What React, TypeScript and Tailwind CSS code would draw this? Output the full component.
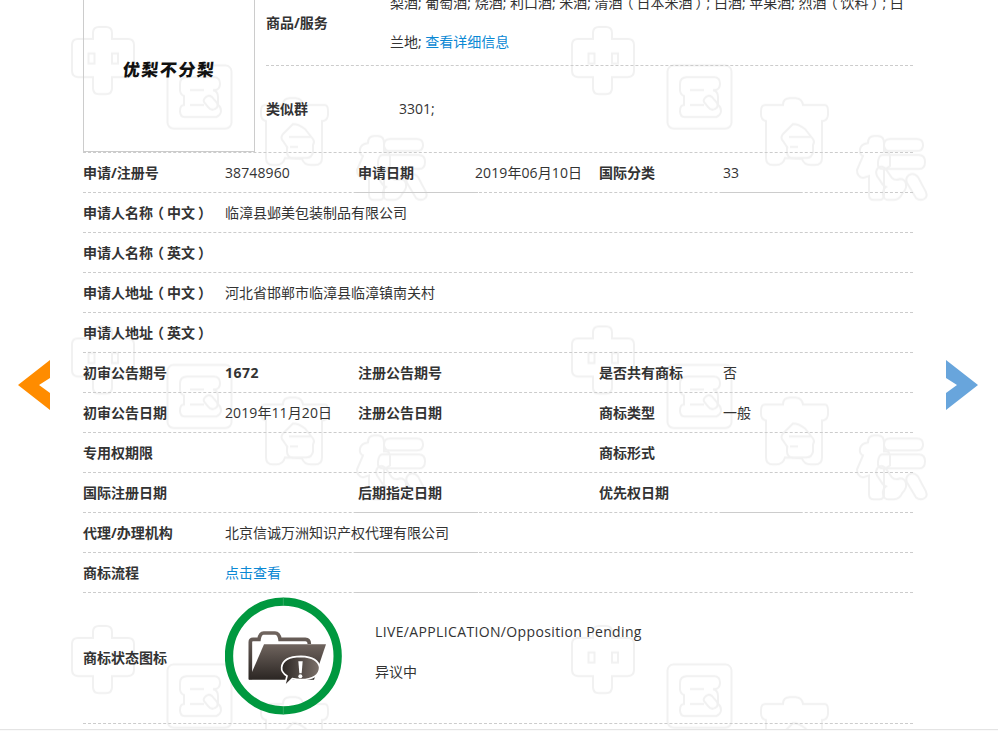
import React from "react";

const FONT = '"Open Sans","Noto Sans CJK SC",sans-serif';

function Watermark() {
  return (
    <svg className="absolute inset-0 w-full h-full" width="998" height="731" aria-hidden="true">
      <defs>
        <pattern id="wm" width="500" height="299.5" patternUnits="userSpaceOnUse">
          <g fill="none" stroke="#f1f1f1" strokeWidth="2">
            <path d="M93 33q0-6 6-6h7q6 0 6 6v6h16q6 0 6 6v26q0 6-6 6h-16v11q0 6-6 6h-7q-6 0-6-6V77H78q-6 0-6-6V45q0-6 6-6h15z" />
            <rect x="88.500" y="53.500" width="6" height="10" />
            <rect x="112" y="53.500" width="6" height="10" />
            <rect x="167.500" y="65.500" width="64" height="63" rx="6" />
            <path d="M187 77h27q6 0 6 6.500t-6 6.500h-1q5 1 5 7v8q3 2 3 6t-5 6h-31q-5 0-5-6t4-6V96q-4-2-4-6v-6q0-7 7-7zM190 90h14M190 105h14" />
            <path d="M205 98q3-4 7-1l5 6q2 4-2 6t-7-2l-4-5q-1-2 1-4z" />
            <path d="M283 105q0-7 7-7h5q7 0 8 7h22q3 0 3 6v3q0 6-5 7h-1v37q0 7-7 7h-4q-7 0-9-6l-17-1q-2 7-9 7h-3q-7 0-7-7v-37q-5-1-5-7v-3q0-6 4-6h18z" />
            <path d="M293 124l-10 10q-3 4 0 7l4 6h-1 1v5q0 6 6 6h13q6 0 7-6v-7q2-3 0-6l-8-10q-6-5-12-5z" />
            <path d="M289 137h22M290 147h8" />
            <path d="M368 143q0-7 6-7h4q6 0 6 7v9h2q4 0 4 5v9l-6 4v25q0 5-5 5h-5q-5 0-5-5v-19l-6 2q-6-1-6-8l6-14q-4-2-3-7t8-6z" />
            <path d="M390 139h27q6 0 6 6t-6 6h-27q-6 0-6-6t6-6z" />
            <path d="M382 155h37q6 0 6 7t-6 7h-36q-6 0-5-7t4-7z" />
            <path d="M378 168q3-3 7 0l7 10q3 3 8 1q5 0 6 5t-4 10q-2 5-8 6h-5q-5 0-6-5t3-8q-3-1-5-5l-4-6q-2-5 1-8z" />
            <path d="M409 175q5-3 9 2l8 15q2 5-2 7t-8-1l-9-15q-2-5 2-8z" />
          </g>
        </pattern>
      </defs>
      <rect width="998" height="731" fill="url(#wm)" />
    </svg>
  );
}

function StatusIcon() {
  return (
    <svg width="117" height="118" viewBox="47 25 351 354" className="shrink-0 mb-[4px]" aria-hidden="true">
      <defs>
        <linearGradient id="fold" x1="0" y1="0" x2="0" y2="1">
          <stop offset="0" stopColor="#6f645e" />
          <stop offset="1" stopColor="#2b2623" />
        </linearGradient>
        <linearGradient id="bub" x1="0" y1="0" x2="1" y2="0">
          <stop offset="0" stopColor="#2b2623" />
          <stop offset="1" stopColor="#7d726b" />
        </linearGradient>
      </defs>
      <circle cx="222" cy="202" r="163" fill="none" stroke="#00983f" strokeWidth="25" />
      <path d="M222 25v25M222 353v26" stroke="#5fbb85" strokeWidth="1.500" />
      <path d="M123 272V160q0-8 8-8h18q3-19 14-19h34q12 0 15 19h76q12 0 12 14" fill="none" stroke="url(#fold)" strokeWidth="11" />
      <path d="M118 273L164 167h186l-36 106z" fill="url(#fold)" />
      <path d="M225 294l8-32q-18-12-16-26q3-32 58-33q52 2 56 34q-1 34-56 36q-12 0-26 -3z" fill="url(#bub)" stroke="#fff" strokeWidth="5" />
      <path d="M267 218h13l-3 36h-7z" fill="#fff" />
      <circle cx="273" cy="263" r="6" fill="#fff" />
    </svg>
  );
}

function Label({ children }: { children?: React.ReactNode }) {
  return <div className="font-bold text-[#333] whitespace-nowrap">{children}</div>;
}

function Open() {
  return <span className="relative left-[-3px]">（</span>;
}

function Close() {
  return <span className="relative left-[3px]">）</span>;
}

function Row({
  cells,
  solidA,
  solidB,
}: {
  cells: React.ReactNode;
  solidA?: boolean;
  solidB?: boolean;
}) {
  return (
    <div className="relative grid grid-cols-[142px_133px_117px_124px_124px_1fr] items-center h-10 border-b border-dashed border-[#ccc]">
      {cells}
      {solidA && <span className="absolute left-[272px] bottom-[-1px] w-[123px] h-px bg-[#ccc]" />}
      {solidB && <span className="absolute left-[637px] bottom-[-1px] w-[80px] h-px bg-[#ccc]" />}
    </div>
  );
}

function Six({ a, b, c, d, e, f, boldB }: { a: string; b?: string; c: string; d?: string; e: string; f?: string; boldB?: boolean }) {
  return (
    <>
      <Label>{a}</Label>
      <div className={boldB ? "font-bold tracking-[0.5px]" : "tracking-[0.1px] whitespace-nowrap"}>{b}</div>
      <Label>{c}</Label>
      <div className="whitespace-nowrap tracking-[0.1px]">{d}</div>
      <Label>{e}</Label>
      <div>{f}</div>
    </>
  );
}

function Wide({ a, children }: { a: React.ReactNode; children?: React.ReactNode }) {
  return (
    <>
      <Label>{a}</Label>
      <div className="col-span-5 whitespace-nowrap">{children}</div>
    </>
  );
}

function Arrow({ points, color, cls }: { points: string; color: string; cls: string }) {
  return (
    <svg className={cls} width="32" height="50" viewBox="0 0 32 50" aria-hidden="true">
      <polygon points={points} fill={color} />
    </svg>
  );
}

export default function App() {
  return (
    <div className="relative h-[731px] overflow-hidden bg-white text-[14px] text-[#333]" style={{ fontFamily: FONT }}>
      <Watermark />
      <div className="relative -mt-[100px] ml-[83px] w-[830px]">
        <div className="flex h-[253px] border-b border-dashed border-[#ccc]">
          <div className="w-[172px] h-[252px] shrink-0 border border-t-0 border-[#ccc] flex items-center justify-center pt-[88px]">
            <span className="text-[#111] text-[17px] leading-none tracking-[1.5px] font-black -skew-x-6 whitespace-nowrap">优梨不分梨</span>
          </div>
          <div className="ml-[11px] flex-1 flex flex-col">
            <div className="h-[166px] pt-[83px] pb-[5px] border-b border-dashed border-[#ccc] flex items-center">
              <div className="w-[124px] shrink-0 pt-[2px]"><Label>商品/服务</Label></div>
              <div className="leading-[39px] whitespace-nowrap">
                <div>梨酒; 葡萄酒; 烧酒; 利口酒; 米酒; 清酒<Open />日本米酒<Close />; 白酒; 苹果酒; 烈酒<Open />饮料<Close />; 白</div>
                <div>兰地; <span className="text-[#0a88d4]">查看详细信息</span></div>
              </div>
            </div>
            <div className="flex-1 flex items-center pb-[2px]">
              <div className="w-[133px] shrink-0"><Label>类似群</Label></div>
              <div>3301;</div>
            </div>
          </div>
        </div>

        <Row solidA solidB cells={<Six a="申请/注册号" b="38748960" c="申请日期" d="2019年06月10日" e="国际分类" f="33" />} />
        <Row cells={<Wide a={<>申请人名称<Open />中文<Close /></>}>临漳县邺美包装制品有限公司</Wide>} />
        <Row cells={<Wide a={<>申请人名称<Open />英文<Close /></>} />} />
        <Row cells={<Wide a={<>申请人地址<Open />中文<Close /></>}>河北省邯郸市临漳县临漳镇南关村</Wide>} />
        <Row cells={<Wide a={<>申请人地址<Open />英文<Close /></>} />} />
        <Row cells={<Six a="初审公告期号" b="1672" boldB c="注册公告期号" e="是否共有商标" f="否" />} />
        <Row cells={<Six a="初审公告日期" b="2019年11月20日" c="注册公告日期" e="商标类型" f="一般" />} />
        <Row cells={<Six a="专用权期限" c="" e="商标形式" />} />
        <Row solidA solidB cells={<Six a="国际注册日期" c="后期指定日期" e="优先权日期" />} />
        <Row solidA cells={<Wide a="代理/办理机构">北京信诚万洲知识产权代理有限公司</Wide>} />
        <Row solidA cells={<Wide a="商标流程"><span className="text-[#0a88d4]">点击查看</span></Wide>} />

        <div className="flex items-center h-[131px] border-b border-dashed border-[#ccc]">
          <div className="w-[142px] shrink-0 pb-[2px]"><Label>商标状态图标</Label></div>
          <StatusIcon />
          <div className="ml-[33px] mb-[13px] leading-10 whitespace-nowrap">
            <div className="tracking-[0.36px]">LIVE/APPLICATION/Opposition Pending</div>
            <div>异议中</div>
          </div>
        </div>
        <div className="h-[10px]" />
      </div>
      <div className="relative -mt-[5px] h-[5px] border-t border-[#e4e4e4] bg-[#fafafa]" />

      <Arrow cls="absolute left-[18px] top-[360px]" points="32,0 32,18 21,25 32,33 32,50 0,25" color="#ff8c00" />
      <Arrow cls="absolute left-[946px] top-[360px]" points="0,0 32,25 0,50 0,33 11,25 0,18" color="#68a5dc" />
    </div>
  );
}
